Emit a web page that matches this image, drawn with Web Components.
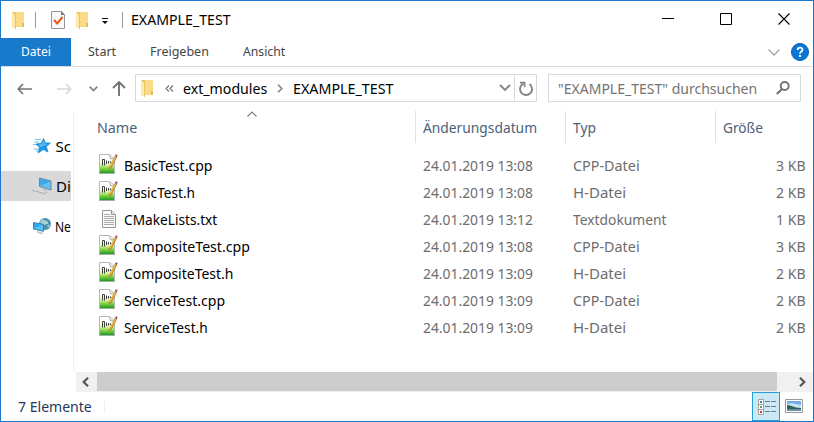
<!DOCTYPE html>
<html lang="de"><head><meta charset="utf-8"><title>EXAMPLE_TEST</title>
<style>html,body{margin:0;background:#fff}body{width:814px;height:422px;overflow:hidden}</style></head>
<body>
<explorer-window></explorer-window>
<script>
const ICONS={
folder:['0 0 16 18','<path d="M3 1h10v15H5z" fill="#fbe08c"/><path d="M4 1h8.500v15H4z" fill="#f9dc85"/><path d="M11 12h2v4h-2z" fill="#e6b957"/><path d="M1 1l4 2v15l-4-2z" fill="#ffe9a6"/><path d="M1 1h4v4z" fill="#edc565"/><path d="M4.500 3v15" stroke="#e9c468"/>'],
check:['0 0 16 20','<path d="M1.500 1.500h10l3 3v14h-13z" fill="#f7f8fa" stroke="#92979e"/><path d="M11 1v4h4z" fill="#777c85"/><path d="M4 10l3.200 3.500L12.500 7" fill="none" stroke="#ed551b" stroke-width="2"/>'],
qat:['0 0 8 7','<path d="M1 0h6v1H1zM1 3h6L4 6z" fill="#111"/>'],
min:['0 0 12 12','<path d="M0 6.500h12" stroke="#000"/>'],
max:['0 0 12 12','<path d="M.5.5h11v11H.5z" fill="none" stroke="#000"/>'],
close:['0 0 12 12','<path d="M.5.5l11 11M11.500.5l-11 11" stroke="#000" stroke-width="1.100"/>'],
chev:['0 0 12 7','<path d="M.5.5L6 6 11.500.5" fill="none" stroke="#a3a3a3" stroke-width="1.300"/>'],
help:['0 0 18 18','<circle cx="9" cy="9" r="8.500" fill="#0877d8" stroke="#075cad"/><path d="M6.700 7c0-3.200 4.800-3 4.800-.3 0 1.800-2.500 1.800-2.500 4M9 12v2" fill="none" stroke="#fff" stroke-width="1.800"/>'],
back:['0 0 15 12','<path d="M6 1L1.300 6 6 11M1.500 6H15" fill="none" stroke="currentColor" stroke-width="1.700"/>'],
fwd:['0 0 15 12','<path d="M9 1l4.700 5L9 11M13.500 6H0" fill="none" stroke="currentColor" stroke-width="1.700"/>'],
down:['0 0 9 6','<path d="M.7.7l3.800 3.800L8.300.7" fill="none" stroke="#858585" stroke-width="1.700"/>'],
drop:['0 0 12 8','<path d="M1 1l5 5 5-5" fill="none" stroke="#858585" stroke-width="1.900"/>'],
up:['0 0 14 15','<path d="M1 7l6-6 6 6M7 1.500V15" fill="none" stroke="#737373" stroke-width="1.900"/>'],
dbl:['0 0 9 7','<path d="M4 .5l-3 3 3 3M8 .5l-3 3 3 3" fill="none" stroke="#777" stroke-width="1.200"/>'],
right:['0 0 6 9','<path d="M1 .7l3.800 3.800L1 8.300" fill="none" stroke="#858585" stroke-width="1.600"/>'],
refresh:['0 0 14 15','<path d="M4.500 2.600A6 6 0 1 0 10.500 3.100" fill="none" stroke="#858585" stroke-width="1.900"/><path d="M1 1.600h4.600v4.600" fill="none" stroke="#858585" stroke-width="1.700"/>'],
search:['0 0 14 14','<circle cx="8.700" cy="5" r="4" fill="none" stroke="#737373" stroke-width="1.900"/><path d="M6 8L.8 13" stroke="#737373" stroke-width="2.200"/>'],
sort:['0 0 10 6','<path d="M.5 5.500L5 1l4.500 4.500" fill="none" stroke="#777" stroke-width="1.100"/>'],
star:['0 0 18 16','<path d="M2 1.500h6M1 4h5M0 6.500h4M1 11h5M3 13h2" stroke="#70c2e9"/><path d="M10.500.5l1.900 4.400 5 .2-4 3.400 1.500 5.500-4.600-2.500L5.200 15l1.400-5.600L3 6l5-.6z" fill="#2198e5" stroke="#137ec5" stroke-width=".7"/><path d="M10.500 2l1.200 3.700 3.800.2-8 3L5 6.700 8.600 6z" fill="#54b9f3"/>'],
pc:['0 0 20 18','<path d="M7.500 1l11.500 3v9L7.500 9.500z" fill="#64c0f6" stroke="#718692"/><path d="M8 1.700l10.500 2.700L8 9z" fill="#38a9f0"/><path d="M0 13l9 1.200 6 1.800-4 1-5-2z" fill="#d9dde0"/><path d="M0 13.500l5 1 7 2 3-1M11 12l4 2" fill="none" stroke="#a6aeb4"/>'],
net:['0 0 18 18','<circle cx="12" cy="7" r="6" fill="#4b8fae"/><path d="M9 2c3 2 7 1 6 5l-5 1-3-3zM14 9l3-2-1 4z" fill="#a5d0d8"/><path d="M.5 5.500l10 2v6.800L.5 12z" fill="#5ac0f8" stroke="#367da8"/><path d="M1 6l9 2-9 3z" fill="#35a5ed"/><path d="M4 14l7 2-3 1.500-4-1.700z" fill="#c3c9cc"/>'],
code:['0 0 20 20','<defs><linearGradient id="g" x2="0" y2="1"><stop offset=".25" stop-color="#fff"/><stop offset=".5" stop-color="#e2f4b4"/><stop offset=".72" stop-color="#8bd646"/><stop offset="1" stop-color="#1c9a25"/></linearGradient></defs><path d="M1.500.5h10l5 4v15h-15z" fill="#fff" stroke="#b5bab3"/><path d="M2 2h9.500l1 3H16v14H2z" fill="url(#g)"/><path d="M1 19.500h16" stroke="#a4b0a4"/><path d="M11.500.8l1 4h4" fill="#eee" stroke="#9b9b9b" stroke-width=".8"/><path d="M4.500 11.500v-6h2v6M8.500 6.500v3.500M10.500 7v2.500M12.500 7.500v1.500" fill="none" stroke="#3c423b" stroke-width="1"/><path d="M18 2.500L12 14" stroke="#b97b20" stroke-width="2.500"/><path d="M17.500 3L11.800 13.500" stroke="#f3bf45" stroke-width="1.300"/><path d="M17 2l1-1.700 1.700 1-1 1.700z" fill="#914347"/><path d="M10.900 13l-.3 3 2.300-2z" fill="#ae8b51"/>'],
txt:['0 0 16 18','<path d="M1.500.5h9l4 4v13h-13z" fill="#fafafa" stroke="#969696"/><path d="M10.500.5v4h4" fill="#e8e8e8" stroke="#969696"/><path d="M3 4.500h6M3 6.500h10M3 8.500h10M3 10.500h10M3 12.500h10M3 14.500h10" stroke="#ababab"/>'],
sleft:['0 0 7 10','<path d="M6 .8L1.700 5 6 9.200" fill="none" stroke="#555" stroke-width="2.200"/>'],
sright:['0 0 7 10','<path d="M1 .8L5.300 5 1 9.200" fill="none" stroke="#555" stroke-width="2.200"/>'],
details:['0 0 18 17','<path d="M.5 1.500h5v15h-5zM.5 6.500h5M.5 11.500h5" fill="#fff" stroke="#a0a0a0"/><path d="M2 3h2v2H2z" fill="#3b8e93"/><path d="M2 8h2v2H2z" fill="#7a9a48"/><path d="M2 13h2v2H2z" fill="#c63b20"/><path d="M7 3.500h5M13 3.500h5M7 8.500h5M13 8.500h5M7 13.500h5M13 13.500h5" stroke="#737b80"/>'],
picture:['0 0 18 14','<path d="M.5.5h17v13H.5z" fill="#fff" stroke="#999"/><path d="M2 2h14v10H2z" fill="#70a9ed"/><path d="M2 5l5-1 9 2v3H2z" fill="#c9e4ef"/><path d="M2 6c5 0 6 3 14 3v1H2z" fill="#315f51"/><path d="M2 10h14v2H2z" fill="#6693a7"/>']
};
class UiIcon extends HTMLElement{constructor(){super();this.attachShadow({mode:'open'})}
connectedCallback(){const [v,b]=ICONS[this.getAttribute('name')],a=v.split(' ');
this.shadowRoot.innerHTML=`<style>:host{display:block;flex:none;width:${a[2]}px;height:${a[3]}px}svg{display:block}</style><svg width="${a[2]}" height="${a[3]}" viewBox="${v}">${b}</svg>`}}
customElements.define('ui-icon',UiIcon);
/* A single-line label condensed horizontally to the width given in "w". */
class FitText extends HTMLElement{constructor(){super();this.attachShadow({mode:'open'}).innerHTML='<style>:host{display:block;flex:none;white-space:nowrap;line-height:20px}span{display:inline-block;transform-origin:0 50%}</style><span><slot></slot></span>'}
connectedCallback(){const w=+this.getAttribute('w');this.style.width=w+'px';const s=this.shadowRoot.querySelector('span');s.style.transform=`scaleX(${w/s.offsetWidth})`}}

const define=(name,css,html)=>customElements.define(name,class extends HTMLElement{constructor(){super();this.attachShadow({mode:'open'}).innerHTML=`<style>*{box-sizing:border-box}${css}</style>${html}`}});
define('title-bar',`:host{display:flex;height:37px;padding-left:10px;color:#000}.sep{width:1px;height:16px;background:#999;margin-top:11px}ui-icon{margin-top:10px}fit-text{margin:8px 0 0 8px}.controls{display:flex;margin-left:auto;padding-right:23px;gap:46px}.controls ui-icon{margin-top:12px}`,
`<ui-icon name="folder"></ui-icon><i class="sep" style="margin-left:8px"></i><ui-icon name="check" style="margin-left:14px;margin-top:9px"></ui-icon><ui-icon name="folder" style="margin-left:9px"></ui-icon><ui-icon name="qat" style="margin:17px 0 0 10px"></ui-icon><i class="sep" style="margin-left:13px"></i><fit-text w="100">EXAMPLE_TEST</fit-text><div class="controls"><ui-icon name="min" style="margin-top:11px"></ui-icon><ui-icon name="max"></ui-icon><ui-icon name="close"></ui-icon></div>`);
define('ribbon-tabs',`:host{display:flex;height:29px;border-bottom:1px solid #dadbdc;font-size:12.5px;color:#444;align-items:center}.file{width:70px;height:28px;background:#1979ca;color:#fff;padding:4px 0 0 20px}.end{display:flex;margin-left:auto;gap:11px;align-items:center;padding-right:4px}`,
`<div class="file"><fit-text w="30">Datei</fit-text></div><fit-text w="28" style="margin-left:17px">Start</fit-text><fit-text w="59" style="margin-left:34px">Freigeben</fit-text><fit-text w="42" style="margin-left:34px">Ansicht</fit-text><div class="end"><ui-icon name="chev"></ui-icon><ui-icon name="help"></ui-icon></div>`);
define('address-bar',`:host{display:flex;height:44px;padding:7px 12px 0 16px;color:#000}.nav{display:flex;width:118px;height:29px;align-items:center}.box{height:28px;border:1px solid #d9d9d9;display:flex;align-items:center}.box fit-text{margin-top:-1px}.path{width:402px;padding-left:4px}.refresh{border-left:1px solid #d9d9d9;height:26px;width:22px;margin-left:3px;padding:6px 0 0 4px}.search{width:253px;margin-left:11px;color:#737373;padding:0 10px 0 9px;justify-content:space-between}`,
`<div class="nav"><ui-icon name="back" style="color:#747474"></ui-icon><ui-icon name="fwd" style="color:#d8d8d8;margin-left:25px"></ui-icon><ui-icon name="down" style="margin-left:17px"></ui-icon><ui-icon name="up" style="margin-left:14px"></ui-icon></div><div class="box path"><ui-icon name="folder"></ui-icon><ui-icon name="dbl" style="margin-left:9px"></ui-icon><fit-text w="84" style="margin-left:9px">ext_modules</fit-text><ui-icon name="right" style="margin-left:10px"></ui-icon><fit-text w="101" style="margin-left:10px">EXAMPLE_TEST</fit-text><ui-icon name="drop" style="margin-left:auto"></ui-icon><div class="refresh"><ui-icon name="refresh"></ui-icon></div></div><div class="box search"><fit-text w="199">"EXAMPLE_TEST" durchsuchen</fit-text><ui-icon name="search"></ui-icon></div>`);
define('nav-item',`:host{display:flex;align-items:center;height:30px;margin-right:2px;padding-left:31px;color:#000}:host([selected]){background:#d9d9d9}.i{width:20px;display:flex;justify-content:center}.t{margin-left:4px;width:16px;overflow:hidden}`,
`<div class="i"><slot name="icon"></slot></div><div class="t"><slot></slot></div>`);
define('nav-pane',`:host{display:flex;flex-direction:column;width:73px;height:261px;padding-top:20px;gap:10px;border-right:1px solid #f0f0f0;flex:none}`,
`<nav-item><ui-icon slot="icon" name="star"></ui-icon><fit-text w="15">Sc</fit-text></nav-item><nav-item selected><ui-icon slot="icon" name="pc"></ui-icon><fit-text w="15">Di</fit-text></nav-item><nav-item><ui-icon slot="icon" name="net"></ui-icon><fit-text w="16">Ne</fit-text></nav-item>`);
class FileRow extends HTMLElement{constructor(){super();this.attachShadow({mode:'open'})}
connectedCallback(){const [n,w,d,t,tw,s]=this.data;this.shadowRoot.innerHTML=`<style>:host{display:grid;grid-template-columns:27px 299px 150px 150px 83px;padding-left:23px;height:27px;align-items:center;color:#6d6d6d}.n{color:#000}.s{justify-self:end}ui-icon{margin:-2px 0 0 1px}ui-icon[name=txt]{margin:0 0 0 4px}</style><ui-icon name="${t==='Textdokument'?'txt':'code'}"></ui-icon><fit-text class="n" w="${w}">${n}</fit-text><fit-text w="110">24.01.2019 13:${d}</fit-text><fit-text w="${tw}">${t}</fit-text><fit-text class="s" w="30">${s} KB</fit-text>`}}
class FileList extends HTMLElement{constructor(){super();this.attachShadow({mode:'open'}).innerHTML=`<style>:host{display:flex;flex-direction:column;flex:1;min-width:0;height:281px}.head{display:flex;height:32px;color:#4c607a}.head div{box-sizing:border-box;flex:none;width:150px;padding:6px 0 0 7px;border-left:1px solid #e2e2e2}.head div:first-child{width:341px;padding-left:23px;border:0;display:flex}.head div:last-child{width:98px}.head ui-icon{margin:-6px 0 0 110px}.rows{padding-top:8px}.scroll{display:flex;align-items:center;margin:auto 0 0 2px;width:737px;height:20px;background:#f0f0f0}.thumb{width:680px;height:19px;background:#cdcdcd;align-self:flex-start}.scroll ui-icon:first-child{margin:0 8px 0 6px}.scroll ui-icon:last-child{margin-left:auto;margin-right:7px}</style>
<div class="head"><div><fit-text w="40">Name</fit-text><ui-icon name="sort"></ui-icon></div><div><fit-text w="114">Änderungsdatum</fit-text></div><div><fit-text w="23">Typ</fit-text></div><div><fit-text w="40">Größe</fit-text></div></div><div class="rows"></div><div class="scroll"><ui-icon name="sleft"></ui-icon><div class="thumb"></div><ui-icon name="sright"></ui-icon></div>`}
connectedCallback(){const r=this.shadowRoot.querySelector('.rows');if(r.children.length)return;
for(const data of [['BasicTest.cpp',88,'08','CPP-Datei',67,3],['BasicTest.h',71,'08','H-Datei',53,2],['CMakeLists.txt',93,'12','Textdokument',94,1],['CompositeTest.cpp',126,'08','CPP-Datei',67,3],['CompositeTest.h',109,'09','H-Datei',53,2],['ServiceTest.cpp',101,'09','CPP-Datei',67,2],['ServiceTest.h',84,'09','H-Datei',53,2]]){const e=document.createElement('file-row');e.data=data;r.append(e)}}}
define('status-bar',`:host{display:flex;height:29px;color:#1e395b;padding-left:17px}fit-text{margin-top:4px}.sep{width:1px;height:13px;background:#eee;margin:8px 0 0 12px}.view{width:28px;height:29px;margin-left:auto;border:1px solid #26a0da;background:#cbe8f6;padding:5px 0 0 5px}.large{width:33px;padding:7px 0 0 5px}`,
`<fit-text w="74">7 Elemente</fit-text><i class="sep"></i><div class="view"><ui-icon name="details"></ui-icon></div><div class="large"><ui-icon name="picture"></ui-icon></div>`);
define('explorer-window',`:host{box-sizing:border-box;display:flex;flex-direction:column;width:814px;height:422px;border:1px solid #1979ca;font:15px "Noto Sans",sans-serif;background:#fff}.main{display:flex;height:281px}`,
`<title-bar></title-bar><ribbon-tabs></ribbon-tabs><address-bar></address-bar><div class="main"><nav-pane></nav-pane><file-list></file-list></div><status-bar></status-bar>`);
customElements.define('file-row',FileRow);customElements.define('file-list',FileList);
customElements.define('fit-text',FitText);
</script></body></html>
